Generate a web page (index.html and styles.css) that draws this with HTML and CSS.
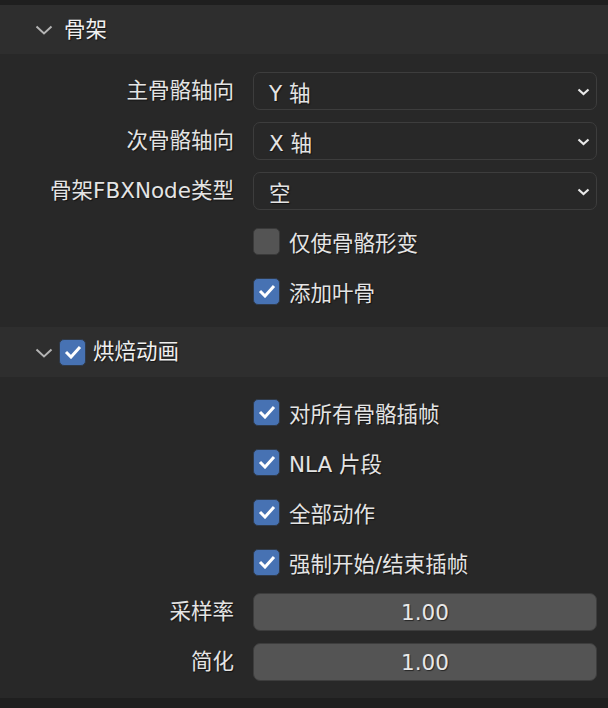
FILE: index.html
```html
<!DOCTYPE html>
<html lang="zh">
<head>
<meta charset="utf-8">
<link rel="stylesheet" href="styles.css">
</head>
<body>
<div class="panel">
  <div class="header">
    <svg class="caret" width="18" height="10" viewBox="0 0 18 10"><polyline points="1.5,1.5 9,8.5 16.5,1.5" fill="none" stroke="#b4b4b4" stroke-width="2"/></svg>
    <span class="htitle">骨架</span>
  </div>
  <div class="body">
    <div class="row">
      <div class="label">主骨骼轴向</div>
      <div class="ctrl dropdown"><span>Y 轴</span><svg width="13" height="8" viewBox="0 0 13 8"><polyline points="1.5,1.5 6.5,6 11.5,1.5" fill="none" stroke="#e8e8e8" stroke-width="2.2"/></svg></div>
    </div>
    <div class="row">
      <div class="label">次骨骼轴向</div>
      <div class="ctrl dropdown"><span>X 轴</span><svg width="13" height="8" viewBox="0 0 13 8"><polyline points="1.5,1.5 6.5,6 11.5,1.5" fill="none" stroke="#e8e8e8" stroke-width="2.2"/></svg></div>
    </div>
    <div class="row">
      <div class="label">骨架FBXNode类型</div>
      <div class="ctrl dropdown"><span>空</span><svg width="13" height="8" viewBox="0 0 13 8"><polyline points="1.5,1.5 6.5,6 11.5,1.5" fill="none" stroke="#e8e8e8" stroke-width="2.2"/></svg></div>
    </div>
    <div class="row">
      <div class="label"></div>
      <div class="ctrl check"><span class="box"></span><span>仅使骨骼形变</span></div>
    </div>
    <div class="row">
      <div class="label"></div>
      <div class="ctrl check"><span class="box on"><svg width="18" height="14" viewBox="0 0 18 14"><polyline points="2,7 7,12 16,2" fill="none" stroke="#fff" stroke-width="3"/></svg></span><span>添加叶骨</span></div>
    </div>
  </div>
  <div class="header">
    <svg class="caret" width="18" height="10" viewBox="0 0 18 10"><polyline points="1.5,1.5 9,8.5 16.5,1.5" fill="none" stroke="#b4b4b4" stroke-width="2"/></svg>
    <span class="box on hbox"><svg width="18" height="14" viewBox="0 0 18 14"><polyline points="2,7 7,12 16,2" fill="none" stroke="#fff" stroke-width="3"/></svg></span>
    <span class="htitle">烘焙动画</span>
  </div>
  <div class="body">
    <div class="row">
      <div class="label"></div>
      <div class="ctrl check"><span class="box on"><svg width="18" height="14" viewBox="0 0 18 14"><polyline points="2,7 7,12 16,2" fill="none" stroke="#fff" stroke-width="3"/></svg></span><span>对所有骨骼插帧</span></div>
    </div>
    <div class="row">
      <div class="label"></div>
      <div class="ctrl check"><span class="box on"><svg width="18" height="14" viewBox="0 0 18 14"><polyline points="2,7 7,12 16,2" fill="none" stroke="#fff" stroke-width="3"/></svg></span><span>NLA 片段</span></div>
    </div>
    <div class="row">
      <div class="label"></div>
      <div class="ctrl check"><span class="box on"><svg width="18" height="14" viewBox="0 0 18 14"><polyline points="2,7 7,12 16,2" fill="none" stroke="#fff" stroke-width="3"/></svg></span><span>全部动作</span></div>
    </div>
    <div class="row">
      <div class="label"></div>
      <div class="ctrl check"><span class="box on"><svg width="18" height="14" viewBox="0 0 18 14"><polyline points="2,7 7,12 16,2" fill="none" stroke="#fff" stroke-width="3"/></svg></span><span>强制开始/结束插帧</span></div>
    </div>
    <div class="row">
      <div class="label">采样率</div>
      <div class="ctrl number">1.00</div>
    </div>
    <div class="row">
      <div class="label">简化</div>
      <div class="ctrl number">1.00</div>
    </div>
  </div>
</div>
</body>
</html>
```
FILE: styles.css
```css
html, body {
  margin: 0;
  padding: 0;
}
body {
  width: 608px;
  height: 708px;
  background: #1f1f1f;
  font-family: "DejaVu Sans", "Noto Sans CJK SC", sans-serif;
  font-size: 21.5px;
  color: #e4e4e4;
  text-shadow: 1px 1px 1px rgba(0, 0, 0, 0.55);
  overflow: hidden;
}
.panel {
  padding-top: 5px;
  display: flex;
  flex-direction: column;
}
.header {
  height: 49px;
  background: #2e2e2e;
  display: flex;
  align-items: center;
  padding-left: 35px;
  box-sizing: border-box;
}
.header + .body + .header {
  height: 50px;
}
.caret {
  margin-right: 11px;
  margin-top: 1px;
}
.htitle {
  color: #f0f0f0;
  line-height: 1;
}
.hbox {
  margin-left: -5px;
  margin-right: 7px;
}
.body {
  background: #282828;
  padding: 18px 11px 17px 0;
  display: flex;
  flex-direction: column;
  gap: 12px;
}
.body:last-child {
  padding-top: 16px;
}
.row {
  display: flex;
  height: 38px;
  align-items: center;
  gap: 19px;
}
.label {
  width: 234px;
  text-align: right;
  flex: none;
  line-height: 1;
}
.ctrl {
  flex: 1;
  height: 38px;
  box-sizing: border-box;
  display: flex;
  align-items: center;
}
.dropdown {
  border: 1.5px solid #3d3d3d;
  border-radius: 7px;
  background: #282828;
  padding: 0 6px 0 15px;
  justify-content: space-between;
}
.dropdown svg {
  margin-top: 2px;
}
.check {
  gap: 9px;
}
.box {
  width: 27px;
  height: 27px;
  box-sizing: border-box;
  border-radius: 5px;
  background: #545454;
  border: 1px solid #3a3a3a;
  display: flex;
  align-items: center;
  justify-content: center;
  flex: none;
}
.box.on {
  background: #4772b3;
  border-color: #2f3a4a;
}
.number {
  background: #545454;
  border: 1.5px solid #3d3d3d;
  border-radius: 7px;
  justify-content: center;
  color: #e8e8e8;
}
```
